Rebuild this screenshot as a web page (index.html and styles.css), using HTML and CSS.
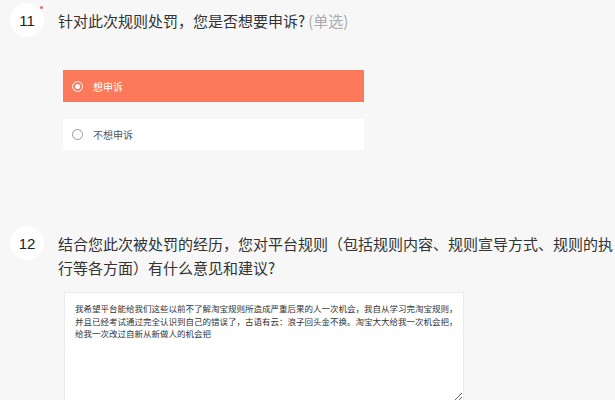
FILE: index.html
```html
<!DOCTYPE html>
<html lang="zh-CN">
<head>
<meta charset="utf-8">
<link rel="stylesheet" href="styles.css">
</head>
<body>
<div class="page">
  <section class="question q1">
    <div class="qhead">
      <div class="num">11<span class="req"></span></div>
      <div class="title">针对此次规则处罚，您是否想要申诉?<span class="hint">(单选)</span></div>
    </div>
    <div class="options">
      <div class="option selected"><span class="radio"></span><span class="label">想申诉</span></div>
      <div class="option"><span class="radio"></span><span class="label">不想申诉</span></div>
    </div>
  </section>
  <section class="question q2">
    <div class="qhead">
      <div class="num">12</div>
      <div class="title">结合您此次被处罚的经历，您对平台规则（包括规则内容、规则宣导方式、规则的执行等各方面）有什么意见和建议?</div>
    </div>
    <textarea class="answer">我希望平台能给我们这些以前不了解淘宝规则所造成严重后果的人一次机会，我自从学习完淘宝规则，并且已经考试通过完全认识到自己的错误了，古语有云：浪子回头金不换。淘宝大大给我一次机会把，给我一次改过自新从新做人的机会把</textarea>
  </section>
</div>
</body>
</html>
```
FILE: styles.css
```css
html, body {
  margin: 0;
  padding: 0;
  background: #f7f7f7;
}
body {
  font-family: "Noto Sans CJK SC", "Noto Sans", sans-serif;
  color: #333;
  width: 615px;
  height: 400px;
  overflow: hidden;
}
.page {
  padding-top: 3px;
}
.qhead {
  display: flex;
  align-items: flex-start;
  padding-left: 10px;
}
.num {
  position: relative;
  flex: 0 0 34px;
  width: 34px;
  height: 34px;
  border-radius: 50%;
  background: #fff;
  display: flex;
  align-items: center;
  justify-content: center;
  font-family: "Liberation Sans", Arial, sans-serif;
  font-size: 15px;
  color: #222;
}
.req {
  position: absolute;
  top: 3px;
  right: 1px;
  width: 3px;
  height: 3px;
  border-radius: 50%;
  background: #f06a6a;
}
.title {
  margin-left: 14px;
  margin-top: 6px;
  font-size: 15px;
  line-height: 24px;
  color: #333;
  width: 558px;
}
.hint {
  color: #aaa;
  margin-left: 3px;
}
.options {
  margin: 33px 0 0 63px;
  width: 301px;
  display: flex;
  flex-direction: column;
  gap: 17px;
}
.option {
  height: 31px;
  background: #fff;
  display: flex;
  align-items: center;
  padding-left: 9px;
  font-size: 10px;
  color: #555;
}
.option.selected {
  height: 32px;
  background: #fd795b;
  color: #fff;
}
.radio {
  width: 9px;
  height: 9px;
  border: 1px solid #999;
  border-radius: 50%;
  box-sizing: content-box;
  margin-right: 10px;
  position: relative;
}
.option.selected .radio {
  border-color: #fff;
}
.option.selected .radio::after {
  content: "";
  position: absolute;
  left: 2px;
  top: 2px;
  width: 5px;
  height: 5px;
  border-radius: 50%;
  background: #fff;
}
.q2 {
  margin-top: 76px;
}
.answer {
  display: block;
  margin: 12px 0 0 64px;
  width: 400px;
  height: 110px;
  box-sizing: border-box;
  border: 1px solid #ececec;
  background: #fff;
  padding: 9px 4px 9px 10px;
  font-family: "Noto Sans CJK SC", sans-serif;
  font-size: 8.5px;
  line-height: 12.5px;
  color: #333;
  outline: none;
}
```
